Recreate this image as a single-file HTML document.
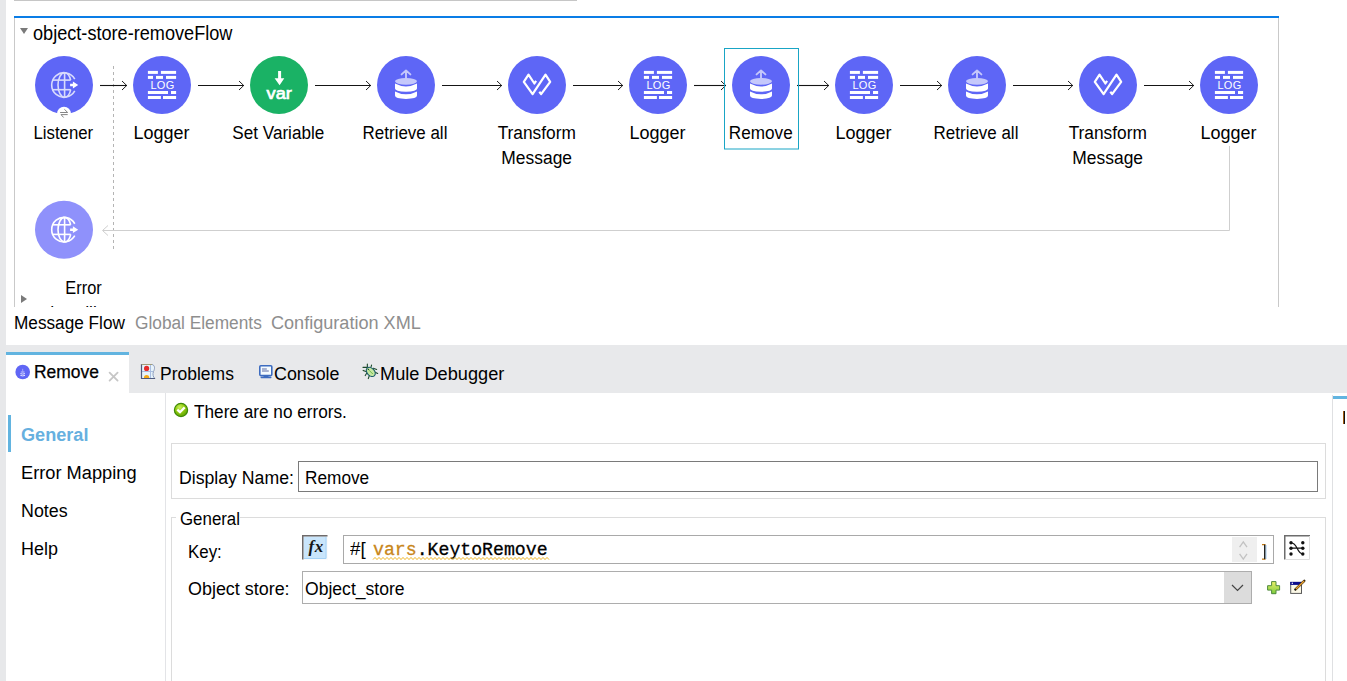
<!DOCTYPE html>
<html><head><meta charset="utf-8"><style>
html,body{margin:0;padding:0;width:1347px;height:681px;overflow:hidden;background:#fff;}
.t,.r,svg{position:absolute;}
.t{white-space:pre;}
</style></head><body>
<div class="r" style="left:0px;top:0px;width:6px;height:681px;background:#e7e8ea;"></div>
<div class="r" style="left:14px;top:0px;width:563px;height:1px;background:#c6c6c6;"></div>
<div class="r" style="left:14px;top:16px;width:1265px;height:291px;background:#fff;border-left:1px solid #c9c9c9;border-right:1px solid #c9c9c9;box-sizing:border-box;"></div>
<div class="r" style="left:14px;top:16px;width:1265px;height:2px;background:#0a7de6;"></div>
<svg style="left:18px;top:26px" width="12" height="10"><path d="M2 2 L10 2 L6 8 Z" fill="#7a7a7a"></path></svg>
<div class="t" style="left:33.4px;top:23.59px;font-size:19.5px;line-height:19.5px;color:#000;font-weight:normal;font-family:'Liberation Sans', sans-serif;"><span style="display: inline-block; transform: scaleX(0.9293); transform-origin: left center;">object-store-removeFlow</span></div>
<svg style="left:0;top:0" width="1347" height="307">
<path d="M113.5 66 V250" stroke="#b4b4b4" stroke-width="1" stroke-dasharray="3 3"></path>
<path d="M1229.5 146 V230.5 H103" stroke="#cfcfcf" stroke-width="1" fill="none"></path>
<path d="M108 225.5 L102.5 230.5 L108 235.5" stroke="#cfcfcf" stroke-width="1" fill="none"></path>
<circle cx="64" cy="85" r="29" fill="#5e66f6"></circle>
<g stroke="#d9dbfc" stroke-width="1.6" fill="none"><path d="M74.76 79.04 A12.3 12.3 0 1 0 74.76 90.96"></path><path d="M64.6 72.7 A6.6 12.3 0 0 0 64.6 97.3"></path><path d="M64.6 72.7 A6.6 12.3 0 0 1 70.65 80.1"></path><path d="M70.70 89.7 A6.6 12.3 0 0 1 64.6 97.3"></path><path d="M64.6 72.7 V97.3"></path><path d="M52.72 80.1 H70.65"></path><path d="M52.63 89.7 H70.70"></path></g><path d="M70.1 83.8 H72.9 V81.6 L78.2 85 L72.9 88.4 V86.2 H70.1 Z" fill="#fff"></path>
<path d="M100 85.5 H127" stroke="#151515" stroke-width="1.1"></path>
<path d="M122 81 L126.7 85.5 L122 90" stroke="#151515" stroke-width="0.95" fill="none"></path>
<circle cx="162" cy="85" r="29" fill="#5e66f6"></circle>
<g fill="#fff"><rect x="147.9" y="70.9" width="10.0" height="3"></rect><rect x="160.9" y="70.9" width="15.2" height="3"></rect><rect x="147.9" y="75.9" width="5.1" height="3"></rect><rect x="156.0" y="75.9" width="7.0" height="3"></rect><rect x="166.0" y="75.9" width="10.1" height="3"></rect><rect x="147.9" y="91.0" width="20.1" height="3"></rect><rect x="171.0" y="91.0" width="5.1" height="3"></rect><rect x="147.9" y="96.0" width="13.0" height="3"></rect><rect x="163.0" y="96.0" width="13.1" height="3"></rect></g><text x="162.5" y="89.3" fill="#fff" font-family="Liberation Sans" font-size="11" text-anchor="middle" letter-spacing="0.3">LOG</text>
<path d="M198 85.5 H244" stroke="#151515" stroke-width="1.1"></path>
<path d="M239 81 L243.7 85.5 L239 90" stroke="#151515" stroke-width="0.95" fill="none"></path>
<circle cx="279" cy="85" r="29" fill="#1ab265"></circle>
<path d="M278.1 70.9 H281.1 V78.2 H284.3 L279.6 85.3 L274.6 78.2 H278.1 Z" fill="#fff"></path><text x="279.2" y="99" fill="#fff" font-family="Liberation Sans" font-size="16.5" stroke="#fff" stroke-width="0.7" text-anchor="middle" transform="translate(279 0) scale(1.1 1) translate(-279 0)">var</text>
<path d="M315 85.5 H371" stroke="#151515" stroke-width="1.1"></path>
<path d="M366 81 L370.7 85.5 L366 90" stroke="#151515" stroke-width="0.95" fill="none"></path>
<circle cx="406" cy="85" r="29" fill="#5e66f6"></circle>
<path d="M406 78 L406 70.8 M401.6 74.4 L406 70.4 L410.4 74.4" stroke="#c5c8fb" stroke-width="1.9" fill="none" stroke-linecap="round" stroke-linejoin="round"></path><ellipse cx="406" cy="81.3" rx="11" ry="3.4" fill="#c5c8fb"></ellipse><path d="M395 83.6 Q406 89.4 417 83.6 L417 88.6 Q417 91.6 406 91.8 Q395 91.6 395 88.6 Z" fill="#fff"></path><path d="M395 91.4 Q406 97.2 417 91.4 L417 95.6 Q417 98.8 406 99 Q395 98.8 395 95.6 Z" fill="#fff"></path>
<path d="M442 85.5 H502" stroke="#151515" stroke-width="1.1"></path>
<path d="M497 81 L501.7 85.5 L497 90" stroke="#151515" stroke-width="0.95" fill="none"></path>
<circle cx="537" cy="85" r="29" fill="#5e66f6"></circle>
<path d="M536.1 80.9 L534.4 83.5 L528.5 74.7 L523.8 81.8 L532.6 94.1 L545.5 74.7 L550.2 81.8 L541.1 94.1 L539.3 91.8" stroke="#fff" stroke-width="2.2" fill="none" stroke-linejoin="round"></path>
<path d="M573 85.5 H623" stroke="#151515" stroke-width="1.1"></path>
<path d="M618 81 L622.7 85.5 L618 90" stroke="#151515" stroke-width="0.95" fill="none"></path>
<circle cx="658" cy="85" r="29" fill="#5e66f6"></circle>
<g fill="#fff"><rect x="643.9" y="70.9" width="10.0" height="3"></rect><rect x="656.9" y="70.9" width="15.2" height="3"></rect><rect x="643.9" y="75.9" width="5.1" height="3"></rect><rect x="652.0" y="75.9" width="7.0" height="3"></rect><rect x="662.0" y="75.9" width="10.1" height="3"></rect><rect x="643.9" y="91.0" width="20.1" height="3"></rect><rect x="667.0" y="91.0" width="5.1" height="3"></rect><rect x="643.9" y="96.0" width="13.0" height="3"></rect><rect x="659.0" y="96.0" width="13.1" height="3"></rect></g><text x="658.5" y="89.3" fill="#fff" font-family="Liberation Sans" font-size="11" text-anchor="middle" letter-spacing="0.3">LOG</text>
<path d="M694 85.5 H726" stroke="#151515" stroke-width="1.1"></path>
<path d="M721 81 L725.7 85.5 L721 90" stroke="#151515" stroke-width="0.95" fill="none"></path>
<circle cx="761" cy="85" r="29" fill="#5e66f6"></circle>
<path d="M761 78 L761 70.8 M756.6 74.4 L761 70.4 L765.4 74.4" stroke="#c5c8fb" stroke-width="1.9" fill="none" stroke-linecap="round" stroke-linejoin="round"></path><ellipse cx="761" cy="81.3" rx="11" ry="3.4" fill="#c5c8fb"></ellipse><path d="M750 83.6 Q761 89.4 772 83.6 L772 88.6 Q772 91.6 761 91.8 Q750 91.6 750 88.6 Z" fill="#fff"></path><path d="M750 91.4 Q761 97.2 772 91.4 L772 95.6 Q772 98.8 761 99 Q750 98.8 750 95.6 Z" fill="#fff"></path>
<path d="M797 85.5 H829" stroke="#151515" stroke-width="1.1"></path>
<path d="M824 81 L828.7 85.5 L824 90" stroke="#151515" stroke-width="0.95" fill="none"></path>
<circle cx="864" cy="85" r="29" fill="#5e66f6"></circle>
<g fill="#fff"><rect x="849.9" y="70.9" width="10.0" height="3"></rect><rect x="862.9" y="70.9" width="15.2" height="3"></rect><rect x="849.9" y="75.9" width="5.1" height="3"></rect><rect x="858.0" y="75.9" width="7.0" height="3"></rect><rect x="868.0" y="75.9" width="10.1" height="3"></rect><rect x="849.9" y="91.0" width="20.1" height="3"></rect><rect x="873.0" y="91.0" width="5.1" height="3"></rect><rect x="849.9" y="96.0" width="13.0" height="3"></rect><rect x="865.0" y="96.0" width="13.1" height="3"></rect></g><text x="864.5" y="89.3" fill="#fff" font-family="Liberation Sans" font-size="11" text-anchor="middle" letter-spacing="0.3">LOG</text>
<path d="M900 85.5 H942" stroke="#151515" stroke-width="1.1"></path>
<path d="M937 81 L941.7 85.5 L937 90" stroke="#151515" stroke-width="0.95" fill="none"></path>
<circle cx="977" cy="85" r="29" fill="#5e66f6"></circle>
<path d="M977 78 L977 70.8 M972.6 74.4 L977 70.4 L981.4 74.4" stroke="#c5c8fb" stroke-width="1.9" fill="none" stroke-linecap="round" stroke-linejoin="round"></path><ellipse cx="977" cy="81.3" rx="11" ry="3.4" fill="#c5c8fb"></ellipse><path d="M966 83.6 Q977 89.4 988 83.6 L988 88.6 Q988 91.6 977 91.8 Q966 91.6 966 88.6 Z" fill="#fff"></path><path d="M966 91.4 Q977 97.2 988 91.4 L988 95.6 Q988 98.8 977 99 Q966 98.8 966 95.6 Z" fill="#fff"></path>
<path d="M1013 85.5 H1073" stroke="#151515" stroke-width="1.1"></path>
<path d="M1068 81 L1072.7 85.5 L1068 90" stroke="#151515" stroke-width="0.95" fill="none"></path>
<circle cx="1108" cy="85" r="29" fill="#5e66f6"></circle>
<path d="M1107.1 80.9 L1105.4 83.5 L1099.5 74.7 L1094.8 81.8 L1103.6 94.1 L1116.5 74.7 L1121.2 81.8 L1112.1 94.1 L1110.3 91.8" stroke="#fff" stroke-width="2.2" fill="none" stroke-linejoin="round"></path>
<path d="M1144 85.5 H1194" stroke="#151515" stroke-width="1.1"></path>
<path d="M1189 81 L1193.7 85.5 L1189 90" stroke="#151515" stroke-width="0.95" fill="none"></path>
<circle cx="1229" cy="85" r="29" fill="#5e66f6"></circle>
<g fill="#fff"><rect x="1214.9" y="70.9" width="10.0" height="3"></rect><rect x="1227.9" y="70.9" width="15.2" height="3"></rect><rect x="1214.9" y="75.9" width="5.1" height="3"></rect><rect x="1223.0" y="75.9" width="7.0" height="3"></rect><rect x="1233.0" y="75.9" width="10.1" height="3"></rect><rect x="1214.9" y="91.0" width="20.1" height="3"></rect><rect x="1238.0" y="91.0" width="5.1" height="3"></rect><rect x="1214.9" y="96.0" width="13.0" height="3"></rect><rect x="1230.0" y="96.0" width="13.1" height="3"></rect></g><text x="1229.5" y="89.3" fill="#fff" font-family="Liberation Sans" font-size="11" text-anchor="middle" letter-spacing="0.3">LOG</text>
<circle cx="64" cy="113.8" r="7" fill="#fff"></circle>
<path d="M60.1 112.5 H67.7 L64.4 109.3 M67.7 114.6 H61 L63.6 117.5" stroke="#858585" stroke-width="1" fill="none"></path>
<circle cx="64" cy="229.7" r="29" fill="#8f91fb"></circle>
<g stroke="#fff" stroke-width="1.6" fill="none"><path d="M74.76 223.74 A12.3 12.3 0 1 0 74.76 235.66"></path><path d="M64.6 217.39999999999998 A6.6 12.3 0 0 0 64.6 242.0"></path><path d="M64.6 217.39999999999998 A6.6 12.3 0 0 1 70.65 224.79999999999998"></path><path d="M70.70 234.39999999999998 A6.6 12.3 0 0 1 64.6 242.0"></path><path d="M64.6 217.39999999999998 V242.0"></path><path d="M52.72 224.79999999999998 H70.65"></path><path d="M52.63 234.39999999999998 H70.70"></path></g><path d="M70.1 228.5 H72.9 V226.29999999999998 L78.2 229.7 L72.9 233.1 V230.89999999999998 H70.1 Z" fill="#fff"></path>
<path d="M21 295 L27 299 L21 303 Z" fill="#7a7a7a"></path>
<rect x="724.5" y="48.5" width="74" height="100.5" fill="none" stroke="#19a5c5" stroke-width="1"></rect>
</svg>
<div class="t" style="left:-336.5px;width:800px;text-align:center;top:125.10px;font-size:17.6px;line-height:17.6px;color:#000;font-weight:normal;font-family:'Liberation Sans', sans-serif;"><span style="display: inline-block; transform: scaleX(0.9538); transform-origin: center center;">Listener</span></div>
<div class="t" style="left:-238.5px;width:800px;text-align:center;top:125.10px;font-size:17.6px;line-height:17.6px;color:#000;font-weight:normal;font-family:'Liberation Sans', sans-serif;"><span style="display: inline-block; transform: scaleX(1.022); transform-origin: center center;">Logger</span></div>
<div class="t" style="left:-121.5px;width:800px;text-align:center;top:125.10px;font-size:17.6px;line-height:17.6px;color:#000;font-weight:normal;font-family:'Liberation Sans', sans-serif;"><span style="display: inline-block; transform: scaleX(0.972); transform-origin: center center;">Set Variable</span></div>
<div class="t" style="left:5.5px;width:800px;text-align:center;top:125.10px;font-size:17.6px;line-height:17.6px;color:#000;font-weight:normal;font-family:'Liberation Sans', sans-serif;"><span style="display: inline-block; transform: scaleX(0.9635); transform-origin: center center;">Retrieve all</span></div>
<div class="t" style="left:136.5px;width:800px;text-align:center;top:125.10px;font-size:17.6px;line-height:17.6px;color:#000;font-weight:normal;font-family:'Liberation Sans', sans-serif;"><span style="display: inline-block; transform: scaleX(0.9835); transform-origin: center center;">Transform</span></div>
<div class="t" style="left:136.5px;width:800px;text-align:center;top:149.60px;font-size:17.6px;line-height:17.6px;color:#000;font-weight:normal;font-family:'Liberation Sans', sans-serif;"><span style="display: inline-block; transform: scaleX(0.9903); transform-origin: center center;">Message</span></div>
<div class="t" style="left:257.5px;width:800px;text-align:center;top:125.10px;font-size:17.6px;line-height:17.6px;color:#000;font-weight:normal;font-family:'Liberation Sans', sans-serif;"><span style="display: inline-block; transform: scaleX(1.022); transform-origin: center center;">Logger</span></div>
<div class="t" style="left:360.5px;width:800px;text-align:center;top:125.10px;font-size:17.6px;line-height:17.6px;color:#000;font-weight:normal;font-family:'Liberation Sans', sans-serif;"><span style="display: inline-block; transform: scaleX(0.9738); transform-origin: center center;">Remove</span></div>
<div class="t" style="left:463.5px;width:800px;text-align:center;top:125.10px;font-size:17.6px;line-height:17.6px;color:#000;font-weight:normal;font-family:'Liberation Sans', sans-serif;"><span style="display: inline-block; transform: scaleX(1.022); transform-origin: center center;">Logger</span></div>
<div class="t" style="left:576.5px;width:800px;text-align:center;top:125.10px;font-size:17.6px;line-height:17.6px;color:#000;font-weight:normal;font-family:'Liberation Sans', sans-serif;"><span style="display: inline-block; transform: scaleX(0.9635); transform-origin: center center;">Retrieve all</span></div>
<div class="t" style="left:707.5px;width:800px;text-align:center;top:125.10px;font-size:17.6px;line-height:17.6px;color:#000;font-weight:normal;font-family:'Liberation Sans', sans-serif;"><span style="display: inline-block; transform: scaleX(0.9835); transform-origin: center center;">Transform</span></div>
<div class="t" style="left:707.5px;width:800px;text-align:center;top:149.60px;font-size:17.6px;line-height:17.6px;color:#000;font-weight:normal;font-family:'Liberation Sans', sans-serif;"><span style="display: inline-block; transform: scaleX(0.9903); transform-origin: center center;">Message</span></div>
<div class="t" style="left:828.5px;width:800px;text-align:center;top:125.10px;font-size:17.6px;line-height:17.6px;color:#000;font-weight:normal;font-family:'Liberation Sans', sans-serif;"><span style="display: inline-block; transform: scaleX(1.022); transform-origin: center center;">Logger</span></div>
<div style="position:absolute;left:0;top:0;width:1347px;height:307px;overflow:hidden">
<div class="t" style="left:-316.6px;width:800px;text-align:center;top:280.10px;font-size:17.6px;line-height:17.6px;color:#000;font-weight:normal;font-family:'Liberation Sans', sans-serif;"><span style="display: inline-block; transform: scaleX(0.9307); transform-origin: center center;">Error</span></div>
<div class="t" style="left:-316.6px;width:800px;text-align:center;top:304.70px;font-size:17.6px;line-height:17.6px;color:#000;font-weight:normal;font-family:'Liberation Sans', sans-serif;"><span style="display: inline-block; transform: scaleX(0.992); transform-origin: center center;">handling</span></div>
</div>
<div class="t" style="left:14.1px;top:315.10px;font-size:17.6px;line-height:17.6px;color:#000;font-weight:normal;font-family:'Liberation Sans', sans-serif;"><span style="display: inline-block; transform: scaleX(0.9776); transform-origin: left center;">Message Flow</span></div>
<div class="t" style="left:134.8px;top:315.10px;font-size:17.6px;line-height:17.6px;color:#8e8e8e;font-weight:normal;font-family:'Liberation Sans', sans-serif;"><span style="display: inline-block; transform: scaleX(0.9822); transform-origin: left center;">Global Elements</span></div>
<div class="t" style="left:271px;top:315.10px;font-size:17.6px;line-height:17.6px;color:#8e8e8e;font-weight:normal;font-family:'Liberation Sans', sans-serif;"><span style="display: inline-block; transform: scaleX(1.028); transform-origin: left center;">Configuration XML</span></div>
<div class="r" style="left:6px;top:344.5px;width:1341px;height:48.5px;background:#e8e9eb;"></div>
<div class="r" style="left:6px;top:352px;width:123px;height:41px;background:#fff;"></div>
<div class="r" style="left:6px;top:352px;width:123px;height:3px;background:#62b4e0;"></div>
<svg style="left:15px;top:364px" width="16" height="16"><circle cx="7.7" cy="8" r="7.3" fill="#6066f5"></circle><path d="M7.7 4.8 V7" stroke="#a9acfa" stroke-width="0.9"></path><ellipse cx="7.7" cy="8" rx="2.2" ry="0.8" fill="#b5b8fb"></ellipse><path d="M5.4 9.6 Q7.7 10.6 10 9.6 M5.4 11.4 Q7.7 12.4 10 11.4" stroke="#e6e7fe" stroke-width="1" fill="none"></path></svg>
<div class="t" style="left:33.9px;top:364.10px;font-size:17.6px;line-height:17.6px;color:#000;font-weight:normal;font-family:'Liberation Sans', sans-serif;-webkit-text-stroke:0.25px #000;"><span style="display: inline-block; transform: scaleX(0.9921); transform-origin: left center;">Remove</span></div>
<svg style="left:108px;top:371px" width="12" height="11"><path d="M1.6 1.6 L9.6 9.6 M9.6 1.6 L1.6 9.6" stroke="#c6c6c6" stroke-width="1.8" stroke-linecap="round"></path></svg>
<svg style="left:140px;top:363px" width="17" height="17"><rect x="1.5" y="1.5" width="12" height="14" fill="#e6f3fb"></rect><path d="M10.5 2 V15 M2 8.5 H13" stroke="#a8bde0" stroke-width="1"></path><path d="M12 1.5 C15 2 15 6 13.5 8.5 C12.5 11 13 14 15 15.5" stroke="#8a9ab8" stroke-width="1" fill="#eef5fb"></path><path d="M1.5 1 V15.5 H15" stroke="#4e5a7e" stroke-width="1.2" fill="none"></path><path d="M1.5 1.5 H12" stroke="#a39d78" stroke-width="1"></path><circle cx="6.6" cy="5.4" r="2.6" fill="#e52a2a"></circle><path d="M3.9 15 A2.7 3 0 0 1 9.3 15 Z" fill="#f5a914"></path></svg>
<div class="t" style="left:159.9px;top:366.10px;font-size:17.6px;line-height:17.6px;color:#000;font-weight:normal;font-family:'Liberation Sans', sans-serif;"><span style="display: inline-block; transform: scaleX(0.9944); transform-origin: left center;">Problems</span></div>
<svg style="left:258px;top:364px" width="16" height="16"><rect x="1.8" y="1.8" width="12" height="9.8" rx="1" fill="#f4fbff" stroke="#3d6cc0" stroke-width="1.6"></rect><path d="M4 5 H8.8 M4 7 H10.8" stroke="#4a5a9a" stroke-width="0.9"></path><rect x="5.5" y="12" width="5" height="1.5" fill="#3d6cc0"></rect><rect x="2.5" y="12.8" width="11" height="1.4" rx="0.7" fill="#3d6cc0"></rect></svg>
<div class="t" style="left:274.3px;top:366.10px;font-size:17.6px;line-height:17.6px;color:#000;font-weight:normal;font-family:'Liberation Sans', sans-serif;"><span style="display: inline-block; transform: scaleX(1.0145); transform-origin: left center;">Console</span></div>
<svg style="left:362px;top:363px" width="17" height="17"><path d="M5.35 1.1 V4 M0.96 4.35 H5.2 M9.55 2.06 L8.98 4.16 M11.27 5.3 L14.7 6.45 M13.2 9.3 L15.66 10.46 M1.15 7.4 L4 8.55 M3.25 12.56 L5.16 9.5 M6.3 15.6 L7.45 12.2" stroke="#1c4a2a" stroke-width="1.1" stroke-linecap="round"></path><ellipse cx="8.8" cy="8.9" rx="5.2" ry="3.7" transform="rotate(45 8.8 8.9)" fill="#c4e8a0" stroke="#1a5a6a" stroke-width="1.1"></ellipse><path d="M7 7.2 L10.8 11" stroke="#5aa83a" stroke-width="0.8"></path><circle cx="6.4" cy="6.4" r="0.7" fill="#1c4a2a"></circle></svg>
<div class="t" style="left:380.3px;top:366.10px;font-size:17.6px;line-height:17.6px;color:#000;font-weight:normal;font-family:'Liberation Sans', sans-serif;"><span style="display: inline-block; transform: scaleX(1.0333); transform-origin: left center;">Mule Debugger</span></div>
<div class="r" style="left:165px;top:393px;width:1px;height:288px;background:#e3e4e7;"></div>
<div class="r" style="left:8px;top:415px;width:3px;height:37px;background:#62b4e0;"></div>
<div class="t" style="left:21px;top:426.90px;font-size:17.6px;line-height:17.6px;color:#66b0df;font-weight:bold;font-family:'Liberation Sans', sans-serif;"><span style="display: inline-block; transform: scaleX(1.03); transform-origin: left center;">General</span></div>
<div class="t" style="left:20.9px;top:465.10px;font-size:17.6px;line-height:17.6px;color:#000;font-weight:normal;font-family:'Liberation Sans', sans-serif;"><span style="display: inline-block; transform: scaleX(1.0369); transform-origin: left center;">Error Mapping</span></div>
<div class="t" style="left:21.2px;top:503.10px;font-size:17.6px;line-height:17.6px;color:#000;font-weight:normal;font-family:'Liberation Sans', sans-serif;"><span style="display: inline-block; transform: scaleX(1.0137); transform-origin: left center;">Notes</span></div>
<div class="t" style="left:21.2px;top:541.10px;font-size:17.6px;line-height:17.6px;color:#000;font-weight:normal;font-family:'Liberation Sans', sans-serif;"><span style="display: inline-block; transform: scaleX(1.0197); transform-origin: left center;">Help</span></div>
<svg style="left:173px;top:402px" width="16" height="16"><defs><radialGradient id="g1" cx="0.4" cy="0.3" r="0.75"><stop offset="0" stop-color="#c8f060"></stop><stop offset="0.45" stop-color="#94cc10"></stop><stop offset="1" stop-color="#5aa000"></stop></radialGradient></defs><circle cx="8" cy="8" r="6.6" fill="url(#g1)" stroke="#3f8a08" stroke-width="1.2"></circle><path d="M4.3 7.6 L7 10.2 L11.7 5.4" stroke="#fff" stroke-width="2.3" fill="none"></path></svg>
<div class="t" style="left:194.4px;top:404.10px;font-size:17.6px;line-height:17.6px;color:#000;font-weight:normal;font-family:'Liberation Sans', sans-serif;"><span style="display: inline-block; transform: scaleX(0.9772); transform-origin: left center;">There are no errors.</span></div>
<div class="r" style="left:171px;top:443px;width:1155px;height:56px;border:1px solid #dcdcdc;box-sizing:border-box;"></div>
<div class="t" style="left:178.8px;top:470.10px;font-size:17.6px;line-height:17.6px;color:#000;font-weight:normal;font-family:'Liberation Sans', sans-serif;"><span style="display: inline-block; transform: scaleX(1.0043); transform-origin: left center;">Display Name:</span></div>
<div class="r" style="left:298px;top:461px;width:1020px;height:31px;border:1px solid #7a7a7a;box-sizing:border-box;background:#fff;"></div>
<div class="t" style="left:305.4px;top:470.10px;font-size:17.6px;line-height:17.6px;color:#000;font-weight:normal;font-family:'Liberation Sans', sans-serif;"><span style="display: inline-block; transform: scaleX(0.9799); transform-origin: left center;">Remove</span></div>
<div class="r" style="left:171px;top:517px;width:1155px;height:200px;border:1px solid #dcdcdc;box-sizing:border-box;"></div>
<div class="r" style="left:176px;top:510px;width:64px;height:14px;background:#fff;"></div>
<div class="t" style="left:179.8px;top:511.10px;font-size:17.6px;line-height:17.6px;color:#000;font-weight:normal;font-family:'Liberation Sans', sans-serif;"><span style="display: inline-block; transform: scaleX(0.9586); transform-origin: left center;">General</span></div>
<div class="t" style="left:188.4px;top:543.90px;font-size:17.6px;line-height:17.6px;color:#000;font-weight:normal;font-family:'Liberation Sans', sans-serif;"><span style="display: inline-block; transform: scaleX(0.9597); transform-origin: left center;">Key:</span></div>
<svg style="left:302px;top:535px" width="26" height="25"><rect x="0" y="0" width="26" height="25" fill="#fbfbfb"></rect><rect x="1.5" y="1.5" width="23" height="22" fill="#c9e5fb"></rect><path d="M24 2 V23.5 H2" stroke="#a6d2f6" stroke-width="1" fill="none"></path><path d="M0.75 24.5 V0.75 H25.5" stroke="#6e6a6a" stroke-width="1.5" fill="none"></path><text x="14.2" y="16.6" font-family="Liberation Serif" font-style="italic" font-weight="bold" font-size="17" text-anchor="middle" fill="#151515" letter-spacing="0.5">fx</text></svg>
<div class="r" style="left:343px;top:535px;width:931px;height:29px;border:1px solid #a9a9a9;box-sizing:border-box;background:#fff;"></div>
<div class="t" style="left:350.3px;top:541.10px;font-size:17.6px;line-height:17.6px;color:#000;font-weight:normal;font-family:'Liberation Sans', sans-serif;"><span style="display: inline-block; transform: scaleX(1.0689); transform-origin: left center;">#[</span></div>
<div class="t" style="left:373.4px;top:541.05px;font-size:18.2px;line-height:18.2px;color:#000;font-weight:normal;font-family:'Liberation Mono', monospace;-webkit-text-stroke:0.3px currentColor;"><span style="display: inline-block; transform: scaleX(0.9997); transform-origin: left center;"><span style="color:#c8861a">vars</span>.KeytoRemove</span></div>
<svg style="left:0;top:0" width="1347" height="681" pointer-events="none"><path d="M373 559.6 L375.0 557.4 L377.0 559.6 L379.0 557.4 L381.0 559.6 L383.0 557.4 L385.0 559.6 L387.0 557.4 L389.0 559.6 L391.0 557.4 L393.0 559.6 L395.0 557.4 L397.0 559.6 L399.0 557.4 L401.0 559.6 L403.0 557.4 L405.0 559.6 L407.0 557.4 L409.0 559.6 L411.0 557.4 L413.0 559.6 L415.0 557.4 L417.0 559.6 L419.0 557.4 L421.0 559.6 L423.0 557.4 L425.0 559.6 L427.0 557.4 L429.0 559.6 L431.0 557.4 L433.0 559.6 L435.0 557.4 L437.0 559.6 L439.0 557.4 L441.0 559.6 L443.0 557.4 L445.0 559.6 L447.0 557.4 L449.0 559.6 L451.0 557.4 L453.0 559.6 L455.0 557.4 L457.0 559.6 L459.0 557.4 L461.0 559.6 L463.0 557.4 L465.0 559.6 L467.0 557.4 L469.0 559.6 L471.0 557.4 L473.0 559.6 L475.0 557.4 L477.0 559.6 L479.0 557.4 L481.0 559.6 L483.0 557.4 L485.0 559.6 L487.0 557.4 L489.0 559.6 L491.0 557.4 L493.0 559.6 L495.0 557.4 L497.0 559.6 L499.0 557.4 L501.0 559.6 L503.0 557.4 L505.0 559.6 L507.0 557.4 L509.0 559.6 L511.0 557.4 L513.0 559.6 L515.0 557.4 L517.0 559.6 L519.0 557.4 L521.0 559.6 L523.0 557.4 L525.0 559.6 L527.0 557.4 L529.0 559.6 L531.0 557.4 L533.0 559.6 L535.0 557.4 L537.0 559.6 L539.0 557.4 L541.0 559.6 L543.0 557.4 L545.0 559.6 L547.0 557.4 L549.0 559.6" stroke="#f0b82a" stroke-width="1" fill="none"></path></svg>
<div class="r" style="left:1232px;top:537px;width:25px;height:25px;background:#efefef;"></div>
<svg style="left:1232px;top:537px" width="25" height="25"><path d="M7.6 10.2 L11.3 4.8 L15 10.2 M7.6 16.8 L11.3 22.2 L15 16.8" stroke="#c2c2c2" stroke-width="1.3" fill="none"></path></svg>
<svg style="left:1259px;top:540px" width="10" height="22"><path d="M3 4.6 H6 V19.2 H3" stroke="#c27a14" stroke-width="1.2" fill="none"></path><path d="M5.5 4.6 V19.2" stroke="#222" stroke-width="1"></path><path d="M6.8 5 V19" stroke="#2a7ad0" stroke-width="0.7"></path></svg>
<svg style="left:1284px;top:535px" width="26" height="25"><rect x="0" y="0" width="26" height="25" fill="#fff"></rect><path d="M0.75 24.5 V0.75 H26" stroke="#6d6d6d" stroke-width="1.5" fill="none"></path><path d="M25.5 1 V24.5 H1" stroke="#dedede" stroke-width="1" fill="none"></path><g fill="#111"><circle cx="7" cy="7.8" r="1.7"></circle><circle cx="7" cy="13.2" r="1.7"></circle><circle cx="7" cy="19" r="1.7"></circle><circle cx="18.8" cy="7.8" r="1.7"></circle><circle cx="18.8" cy="13.2" r="1.7"></circle><circle cx="18.8" cy="19" r="1.7"></circle></g><path d="M7 7.8 C14 7.8 12.5 19 18.8 19 M7 13.2 H18.8" stroke="#111" stroke-width="1.2" fill="none"></path></svg>
<div class="t" style="left:188.4px;top:581.10px;font-size:17.6px;line-height:17.6px;color:#000;font-weight:normal;font-family:'Liberation Sans', sans-serif;"><span style="display: inline-block; transform: scaleX(1.0185); transform-origin: left center;">Object store:</span></div>
<div class="r" style="left:302px;top:571px;width:950px;height:33px;border:1px solid #adadad;box-sizing:border-box;background:#fff;"></div>
<div class="r" style="left:1224px;top:572px;width:27px;height:31px;background:#dcdcdc;"></div>
<svg style="left:1224px;top:572px" width="27" height="31"><path d="M8 13 L13.5 18.5 L19 13" stroke="#444" stroke-width="1.2" fill="none"></path></svg>
<div class="t" style="left:305px;top:581.10px;font-size:17.6px;line-height:17.6px;color:#000;font-weight:normal;font-family:'Liberation Sans', sans-serif;"><span style="display: inline-block; transform: scaleX(0.9985); transform-origin: left center;">Object_store</span></div>
<svg style="left:1266px;top:580px" width="15" height="15"><defs><linearGradient id="pg" x1="0" y1="0" x2="0" y2="1"><stop offset="0" stop-color="#eef06a"></stop><stop offset="1" stop-color="#7acc3e"></stop></linearGradient></defs><path d="M5.6 1.6 H10 V5.7 H13.6 V10.1 H10 V13.7 H5.6 V10.1 H1.6 V5.7 H5.6 Z" fill="url(#pg)" stroke="#4f8a3c" stroke-width="1"></path></svg>
<svg style="left:1289px;top:579px" width="17" height="16"><rect x="1.7" y="3.4" width="10.8" height="11" fill="#fbf8e6" stroke="#5a5a5a" stroke-width="1"></rect><rect x="1.2" y="2.9" width="11.8" height="3" fill="#0c0c8c"></rect><circle cx="3.3" cy="4.3" r="0.7" fill="#fff"></circle><path d="M6.5 10.4 L15.3 1.8" stroke="#3a2a10" stroke-width="2.4" stroke-linecap="round"></path><path d="M6.7 10.2 L15.1 2" stroke="#e8a030" stroke-width="1.4"></path><circle cx="6.3" cy="10.6" r="0.9" fill="#111"></circle></svg>
<div class="r" style="left:1332px;top:395px;width:1px;height:286px;background:#dfe0e2;"></div>
<div class="r" style="left:1333px;top:396px;width:14px;height:3px;background:#62b4e0;"></div>
<div class="r" style="left:1343px;top:411px;width:1px;height:13px;background:#a05a10;"></div>
<div class="r" style="left:1344px;top:411px;width:1px;height:13px;background:#111;"></div>
</body></html>
